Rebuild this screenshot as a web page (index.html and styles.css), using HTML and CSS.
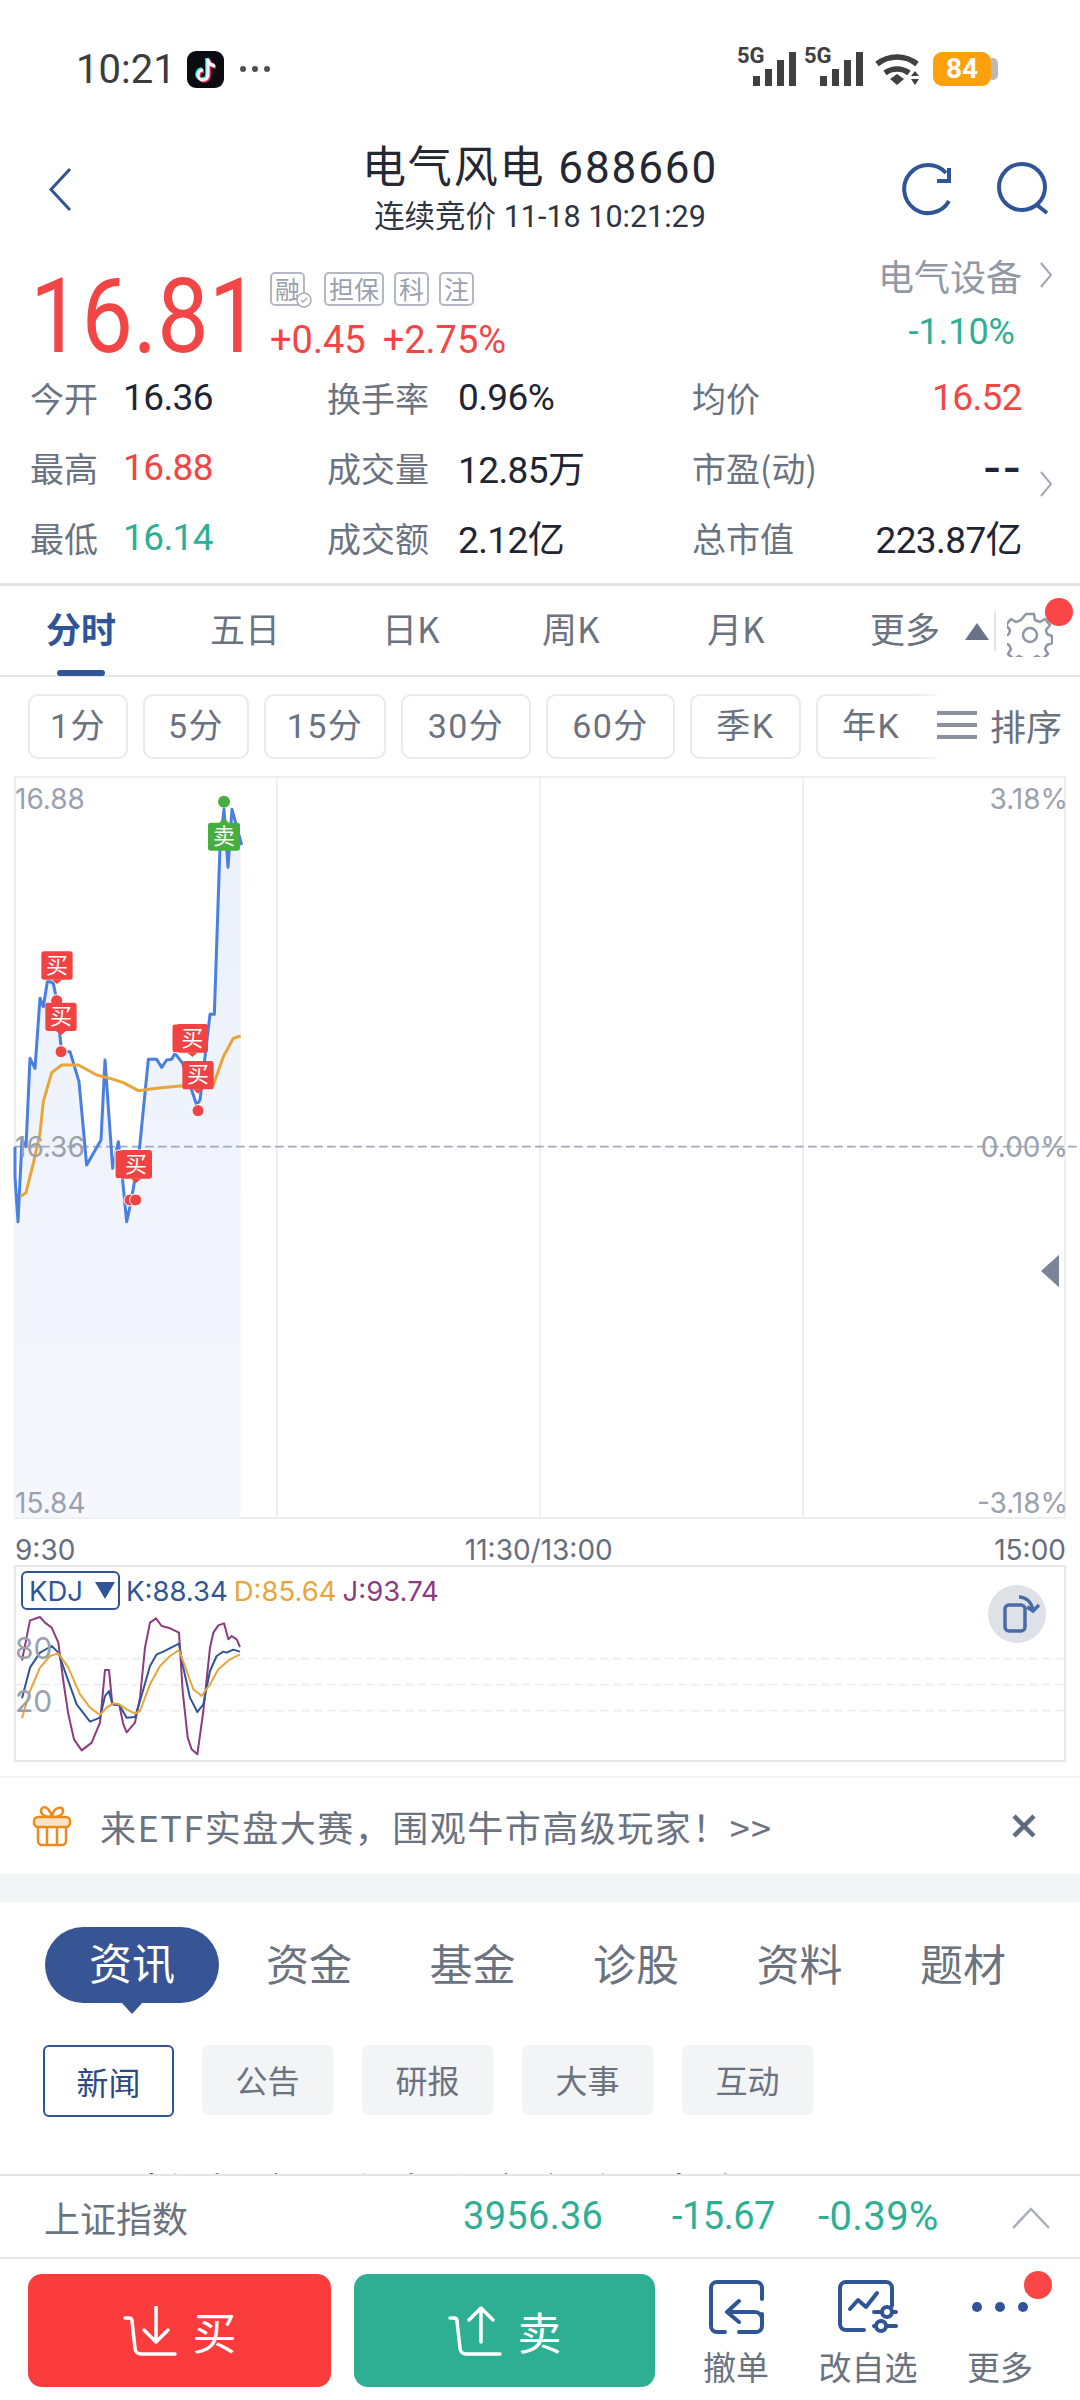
FILE: index.html
```html
<!DOCTYPE html>
<html lang="zh-CN">
<head>
<meta charset="UTF-8" />
<meta name="viewport" content="width=device-width, initial-scale=1.0" />
<title>电气风电 688660</title>
<link rel="stylesheet" href="styles.css">
</head>
<body>
<main class="page">

	<!-- status bar -->
	<div class="statusbar">
		<span class="clock">10:21</span>
		<svg class="tiktok" viewBox="0 0 37 37">
			<rect width="37" height="37" rx="9" fill="#0b0b12"/>
			<path d="M21 8v16a5 5 0 1 1-5-5M21 8c.5 4 3 6.500 7 7" fill="none" stroke="#25f4ee" stroke-width="3.500" transform="translate(-1 -1)"/>
			<path d="M21 8v16a5 5 0 1 1-5-5M21 8c.5 4 3 6.500 7 7" fill="none" stroke="#fe2c55" stroke-width="3.500" transform="translate(1 1)"/>
			<path d="M21 8v16a5 5 0 1 1-5-5M21 8c.5 4 3 6.500 7 7" fill="none" stroke="#fff" stroke-width="3"/>
		</svg>
		<span class="status-dots"><i></i><i></i><i></i></span>
		<div class="status-right">
			<span class="signal"><b>5G</b><svg viewBox="0 0 43 34"><path d="M0 24h7v10h-7zM12 17h7v17h-7zM24 8h7v26h-7zM36 0h7v34h-7z" fill="#404040"/></svg></span>
			<span class="signal"><b>5G</b><svg viewBox="0 0 43 34"><path d="M0 24h7v10h-7zM12 17h7v17h-7zM24 8h7v26h-7zM36 0h7v34h-7z" fill="#404040"/></svg></span>
			<svg class="wifi" viewBox="0 0 47 34">
				<path d="M2 12a32 32 0 0 1 40 0M10 21a20 20 0 0 1 24 0" fill="none" stroke="#404040" stroke-width="5.500"/>
				<path d="M15 27l7-5 7 5-7 6z" fill="#404040"/>
				<path d="M36 24l4-5 4 5zM36 27h8l-4 6z" fill="#404040"/>
			</svg>
			<span class="battery"><span class="battery-level">84</span><i class="battery-rest"></i></span>
		</div>
	</div>

	<!-- nav -->
	<header class="nav">
		<svg class="nav-back" viewBox="0 0 24 45"><path d="M22 2L3 22.500 22 43" fill="none" stroke="#2f5597" stroke-width="3"/></svg>
		<div class="nav-title">
			<h1>电气风电 688660</h1>
			<p>连续竞价 11-18 10:21:29</p>
		</div>
		<div class="nav-icons">
			<svg class="icon-refresh" viewBox="0 0 54 54"><path d="M49 39A24 24 0 1 1 46 11M49 6v13H37" fill="none" stroke="#2f5597" stroke-width="4"/></svg>
			<svg class="icon-search" viewBox="0 0 54 54"><circle cx="26" cy="25" r="23" fill="none" stroke="#2f5597" stroke-width="4"/><path d="M41 43l10 8" fill="none" stroke="#2f5597" stroke-width="4"/></svg>
		</div>
	</header>

	<!-- quote -->
	<section class="quote">
		<div class="price red">16.81</div>
		<div class="quote-mid">
			<div class="tags">
				<span class="tag tag-check">融<svg viewBox="0 0 16 16"><circle cx="8" cy="8" r="7" fill="#fff" stroke="#a7acb8" stroke-width="1.500"/><path d="M5 8l2 2 4-4" fill="none" stroke="#a7acb8" stroke-width="1.500"/></svg></span>
				<span class="tag">担保</span>
				<span class="tag">科</span>
				<span class="tag">注</span>
			</div>
			<div class="change red"><span>+0.45</span><span>+2.75%</span></div>
		</div>
		<div class="sector">
			<div class="sector-name">电气设备<svg viewBox="0 0 12 26"><path d="M1 1l10 12L1 25" fill="none" stroke="#a0a6b3" stroke-width="2"/></svg></div>
			<div class="sector-change green">-1.10%</div>
		</div>
	</section>

	<!-- stats -->
	<section class="stats">
		<span class="label">今开</span><span class="val">16.36</span>
		<span class="label">换手率</span><span class="val">0.96%</span>
		<span class="label">均价</span><span class="val right red">16.52</span>

		<span class="label">最高</span><span class="val red">16.88</span>
		<span class="label">成交量</span><span class="val">12.85万</span>
		<span class="label">市盈(动)</span><span class="val right dash">--</span>

		<span class="label">最低</span><span class="val green">16.14</span>
		<span class="label">成交额</span><span class="val">2.12亿</span>
		<span class="label">总市值</span><span class="val right">223.87亿</span>

		<svg class="stats-more" viewBox="0 0 12 26"><path d="M1 1l10 12L1 25" fill="none" stroke="#a0a6b3" stroke-width="2"/></svg>
	</section>

	<!-- period tabs -->
	<nav class="tabs">
		<span class="tab active">分时</span>
		<span class="tab">五日</span>
		<span class="tab">日K</span>
		<span class="tab">周K</span>
		<span class="tab">月K</span>
		<span class="tab">更多</span>
		<i class="tab-tri"></i>
		<i class="tab-sep"></i>
		<span class="gear">
			<svg viewBox="0 0 46 46">
				<path d="M19 3h8l1 6 5 2 5-3 5 6-4 5 1 4 5 2v7l-5 2-2 4 3 5-6 5-5-3-4 2-1 5h-8l-1-5-4-2-5 3-6-5 3-5-2-4-5-2v-7l5-2 1-4-4-5 5-6 5 3 5-2z" fill="none" stroke="#8f96a4" stroke-width="2.500" stroke-linejoin="round"/>
				<circle cx="23" cy="24" r="7" fill="none" stroke="#8f96a4" stroke-width="2.500"/>
			</svg>
			<i class="dot"></i>
		</span>
	</nav>

	<!-- minute ranges -->
	<div class="ranges">
		<span class="range">1分</span>
		<span class="range">5分</span>
		<span class="range">15分</span>
		<span class="range">30分</span>
		<span class="range">60分</span>
		<span class="range">季K</span>
		<span class="range">年K</span>
		<div class="sort">
			<svg viewBox="0 0 40 30"><path d="M0 3h40M0 15h40M0 27h40" stroke="#8a919f" stroke-width="4"/></svg>
			<span>排序</span>
		</div>
	</div>

	<!-- price chart: coordinates are 3x the page pixels -->
	<div class="chart">
		<svg class="chart-svg" viewBox="0 -12 3240 2229">
			<defs>
				<linearGradient id="area" x1="0" y1="0" x2="0" y2="1">
					<stop offset="0" stop-color="#ebf0fb"/>
					<stop offset="1" stop-color="#f5f7fd"/>
				</linearGradient>
			</defs>
			<path d="M831 -12V2217M1620 -12V2217M2409 -12V2217" stroke="#eceef2" stroke-width="5"/>
			<polygon fill="url(#area)" points="45,1100 45,1190 54,1325 66,1080 78,1100 90,835 105,865 120,655 130,680 142,605 160,610 170,660 180,770 185,815 210,815 237,905 260,1155 303,1080 315,840 338,1165 355,1085 365,1170 380,1325 392,1270 415,1140 445,838 470,838 485,862 500,840 515,838 525,820 548,850 590,975 600,960 615,830 630,703 643,703 660,200 672,88 684,262 696,88 722,190 722,2212 45,2212"/>
			<path d="M45 1100H3240" stroke="#a0a9bd" stroke-width="5" stroke-dasharray="26 13" fill="none"/>
			<polyline class="line-price" points="45,1100 45,1190 54,1325 66,1080 78,1100 90,835 105,865 120,655 130,680 142,605 150,605 160,610 170,660 180,770 185,815 210,815 237,905 260,1155 303,1080 315,840 338,1165 355,1085 365,1170 380,1325 392,1270 415,1140 445,838 470,838 485,862 500,840 515,838 525,820 548,850 590,975 600,960 615,830 630,703 643,703 660,200 672,88 684,262 696,88 725,195"/>
			<polyline class="line-avg" points="62,1250 78,1238 100,1150 120,1060 130,965 155,878 185,855 235,855 290,885 340,898 370,908 415,932 470,925 540,918 640,915 670,830 700,775 722,768"/>

			<circle class="mark-dot" cx="170" cy="662" r="18"/>
			<circle class="mark-dot" cx="183" cy="815" r="18"/>
			<circle class="mark-dot" cx="594" cy="992" r="18"/>
			<circle class="mark-dot" cx="390" cy="1260" r="18"/>
			<circle class="mark-dot" cx="407" cy="1260" r="18"/>
			<circle cx="672" cy="65" r="18" fill="#46ae3f"/>

			<rect class="mark" x="345" y="1110" width="96" height="86" rx="8"/>
			<g class="marker"><rect x="124" y="514" width="94" height="85" rx="8"/><path d="M156 599h30l-15 13z"/><text x="171" y="578">买</text></g>
			<g class="marker"><rect x="136" y="668" width="94" height="85" rx="8"/><path d="M168 753h30l-15 13z"/><text x="183" y="732">买</text></g>
			<rect class="mark" x="516" y="732" width="96" height="86" rx="8"/>
			<g class="marker"><rect x="530" y="732" width="94" height="86" rx="8"/><path d="M562 818h30l-15 13z"/><text x="577" y="797">买</text></g>
			<g class="marker"><rect x="547" y="843" width="94" height="85" rx="8"/><path d="M579 928h30l-15 13z"/><text x="594" y="907">买</text></g>
			<g class="marker"><rect x="360" y="1110" width="96" height="86" rx="8"/><path d="M393 1196h30l-15 13z"/><text x="408" y="1175">买</text></g>
			<g class="marker sell"><rect x="624" y="128" width="96" height="84" rx="8"/><path d="M657 128h30l-15 -13z"/><text x="672" y="192">卖</text></g>
		</svg>
		<span class="ax ax-tl">16.88</span>
		<span class="ax ax-tr">3.18%</span>
		<span class="ax ax-ml">16.36</span>
		<span class="ax ax-mr">0.00%</span>
		<span class="ax ax-bl">15.84</span>
		<span class="ax ax-br">-3.18%</span>
		<svg class="chart-handle" viewBox="0 0 20 36"><path d="M20 0v36L0 18z" fill="#7a8597"/></svg>
	</div>

	<div class="times">
		<span>9:30</span><span class="times-mid">11:30/13:00</span><span>15:00</span>
	</div>

	<!-- KDJ pane -->
	<div class="kdj">
		<svg class="kdj-svg" viewBox="45 225 3153 588">
			<path d="M45 503H3240M45 581H3240M45 659H3240" stroke="#eceef2" stroke-width="5" stroke-dasharray="26 13" fill="none"/>
			<polyline class="kdj-j" points="66,508 90,388 120,378 135,395 155,410 175,455 190,570 205,670 222,745 245,778 275,755 300,695 315,537 327,537 337,640 358,642 370,700 380,724 405,695 420,620 435,470 450,395 468,382 485,405 510,412 537,425 548,600 563,740 575,775 592,790 610,660 630,470 640,425 655,403 672,397 685,445 695,435 710,445 720,468"/>
			<polyline class="kdj-k" points="66,622 90,530 120,485 155,465 175,485 205,570 230,640 270,692 300,680 315,615 327,600 337,640 358,642 380,680 405,678 420,630 450,525 470,490 490,482 537,458 550,530 570,620 592,663 610,640 630,540 650,495 670,482 680,485 700,476 720,482"/>
			<polyline class="kdj-d" points="66,682 90,600 120,530 150,495 175,487 205,530 240,610 270,650 300,672 320,650 340,637 358,640 380,655 405,668 420,660 450,580 480,525 510,495 537,477 560,540 580,595 605,615 630,580 655,535 690,505 720,490"/>
		</svg>
		<div class="kdj-legend">
			<span class="kdj-pick">KDJ<i></i></span>
			<span class="c-k">K:88.34</span>
			<span class="c-d">D:85.64</span>
			<span class="c-j">J:93.74</span>
		</div>
		<span class="ax kdj-80">80</span>
		<span class="ax kdj-20">20</span>
		<span class="rotate">
			<svg viewBox="0 0 58 58"><rect x="17" y="20" width="20" height="26" rx="4" fill="none" stroke="#4a6ba6" stroke-width="3.500"/><path d="M31 12c6 0 12 4 14 13M51 20l-6 6-6-4" fill="none" stroke="#4a6ba6" stroke-width="3.500"/></svg>
		</span>
	</div>

	<!-- banner -->
	<div class="banner">
		<svg class="gift" viewBox="0 0 40 41">
			<path d="M20 11C14 11 9 9 9 5s4-5 7-2 4 8 4 8 1-6 4-8 7-2 7 2-5 6-11 6z" fill="none" stroke="#ee8a1d" stroke-width="2.500"/>
			<rect x="2" y="11" width="36" height="10" rx="4" fill="#fbe3c4" stroke="#ee8a1d" stroke-width="2.500"/>
			<path d="M6 21v14a4 4 0 0 0 4 4h20a4 4 0 0 0 4-4V21M15 21v18M25 21v18" fill="none" stroke="#ee8a1d" stroke-width="2.500"/>
		</svg>
		<span class="banner-text">来ETF实盘大赛，围观牛市高级玩家！&gt;&gt;</span>
		<svg class="banner-close" viewBox="0 0 26 24"><path d="M3 2l20 20M23 2L3 22" stroke="#5f6b80" stroke-width="4.500"/></svg>
	</div>
	<div class="band"></div>

	<!-- news -->
	<section class="news">
		<div class="news-tabs">
			<span class="pill">资讯</span>
			<span>资金</span>
			<span>基金</span>
			<span>诊股</span>
			<span>资料</span>
			<span>题材</span>
		</div>
		<div class="news-subs">
			<span class="sub on">新闻</span>
			<span class="sub">公告</span>
			<span class="sub">研报</span>
			<span class="sub">大事</span>
			<span class="sub">互动</span>
		</div>
		<p class="news-title">3天科创板金股主力资金净流入超行三</p>
	</section>

	<!-- index ticker -->
	<div class="ticker">
		<span class="ticker-name">上证指数</span>
		<span class="ticker-num green">3956.36</span>
		<span class="ticker-chg green">-15.67</span>
		<span class="ticker-pct green">-0.39%</span>
		<svg class="ticker-up" viewBox="0 0 38 22"><path d="M1 21L19 2l18 19" fill="none" stroke="#a8adb8" stroke-width="2.500"/></svg>
	</div>

	<!-- actions -->
	<footer class="actions">
		<button class="btn btn-buy">
			<svg viewBox="0 0 54 50"><path d="M2 12h4c2 0 3 1 3 3l3 27c0 4 3 6 6 6h34M33 1v34M21 24l12 12 12-12" fill="none" stroke="#fff" stroke-width="3.500" stroke-linecap="round" stroke-linejoin="round"/></svg>
			<span>买</span>
		</button>
		<button class="btn btn-sell">
			<svg viewBox="0 0 54 50"><path d="M2 12h4c2 0 3 1 3 3l3 27c0 4 3 6 6 6h34M33 36V2M21 14L33 2l12 12" fill="none" stroke="#fff" stroke-width="3.500" stroke-linecap="round" stroke-linejoin="round"/></svg>
			<span>卖</span>
		</button>
		<div class="act act-cancel">
			<svg viewBox="0 0 57 54"><path d="M17 52H9a6 6 0 0 1-6-6V8a6 6 0 0 1 6-6h39a6 6 0 0 1 6 6v11M54 34v12a6 6 0 0 1-6 6H31M31 21L19 32l12 10M20 32h27a7 7 0 0 1 7 7" fill="none" stroke="#2f5597" stroke-width="4" stroke-linecap="round" stroke-linejoin="round"/></svg>
			<span>撤单</span>
		</div>
		<div class="act act-watch">
			<svg viewBox="0 0 62 54"><path d="M27 50H9a6 6 0 0 1-6-6V8a6 6 0 0 1 6-6h40a6 6 0 0 1 6 6v18M13 29l8-9 8 7 11-14M37 32h22M37 46h22" fill="none" stroke="#2f5597" stroke-width="4" stroke-linecap="round" stroke-linejoin="round"/><circle cx="50" cy="32" r="5" fill="#fff" stroke="#2f5597" stroke-width="4"/><circle cx="44" cy="46" r="5" fill="#fff" stroke="#2f5597" stroke-width="4"/></svg>
			<span>改自选</span>
		</div>
		<div class="act act-more">
			<span class="more-dots"><i></i><i></i><i></i></span>
			<i class="dot"></i>
			<span>更多</span>
		</div>
	</footer>
</main>
</body>
</html>
```

FILE: styles.css
```css
* {
	padding: 0;
	margin: 0;
	box-sizing: border-box;
}
body {
	background: #fff;
	font-family: "Noto Sans CJK SC", sans-serif;
	color: #1f2533;
}
.page {
	width: 1080px;
	height: 2400px;
	overflow: hidden;
	position: relative;
}
.red { color: #f24545; }
.green { color: #2eaf94; }
i { display: block; font-style: normal; }
.dot {
	position: absolute;
	width: 28px;
	height: 28px;
	border-radius: 50%;
	background: #fa4646;
}

/* status bar */
.statusbar {
	height: 138px;
	padding-left: 76px;
	padding-right: 82px;
	display: flex;
	align-items: center;
}
.clock {
	font: 400 40px Roboto, sans-serif;
	color: #3c3c3c;
	width: 111px;
}
.tiktok { width: 37px; height: 37px; }
.status-dots {
	display: flex;
	gap: 6px;
	margin-left: 16px;
}
.status-dots i {
	width: 6px;
	height: 6px;
	border-radius: 50%;
	background: #505050;
}
.status-right {
	margin-left: auto;
	display: flex;
	align-items: center;
	height: 34px;
}
.signal {
	position: relative;
	width: 59px;
	height: 34px;
	margin-right: 8px;
}
.signal b {
	position: absolute;
	left: 0;
	top: -6px;
	font: 700 22px/20px Roboto, sans-serif;
	color: #404040;
}
.signal svg {
	position: absolute;
	right: 0;
	top: 0;
	width: 43px;
	height: 34px;
}
.wifi {
	width: 47px;
	height: 34px;
	margin-left: 4px;
}
.battery {
	display: flex;
	align-items: center;
	margin-left: 11px;
}
.battery-level {
	width: 58px;
	height: 34px;
	border-radius: 9px;
	background: #ffa00d;
	color: #fff;
	font: 700 28px/34px Roboto, sans-serif;
	text-align: center;
}
.battery-rest {
	width: 7px;
	height: 22px;
	border-radius: 0 5px 5px 0;
	background: #b9b9b9;
}

/* nav */
.nav {
	height: 117px;
	padding-top: 6px;
	display: grid;
	grid-template-columns: 1fr auto 1fr;
}
.nav-back {
	width: 24px;
	height: 45px;
	margin: 23px 0 0 48px;
}
.nav-title { text-align: center; }
.nav-title h1 {
	font-size: 44px;
	line-height: 48px;
	font-weight: 400;
	letter-spacing: 1.900px;
	color: #232833;
}
.nav-title h1, .nav-title p {
	font-family: Roboto, "Noto Sans CJK SC", sans-serif;
}
.nav-title p {
	margin-top: 3px;
	font-size: 30.500px;
	line-height: 44px;
	color: #2f3542;
}
.nav-icons {
	display: flex;
	justify-content: flex-end;
	gap: 42px;
	padding: 18px 30px 0 0;
}
.icon-refresh { width: 54px; height: 54px; }
.icon-search { width: 54px; height: 54px; }

/* quote */
.quote {
	height: 110px;
	display: flex;
	padding-left: 30px;
	position: relative;
}
.price {
	font: 400 103px/124px Roboto, sans-serif;
	width: 240px;
	transform: scaleX(.89);
	transform-origin: left center;
}
.tags {
	display: flex;
	gap: 10px;
	margin-top: 17px;
	height: 34px;
}
.tag {
	display: block;
	height: 34px;
	padding: 0 3px;
	border: 2px solid #b3b8c3;
	border-radius: 5px;
	font-size: 25px;
	line-height: 28px;
	color: #9aa0ad;
	position: relative;
}
.tag-check { margin-right: 9px; }
.tag-check svg {
	position: absolute;
	right: -9px;
	bottom: -4px;
	width: 16px;
	height: 16px;
}
.change {
	display: flex;
	gap: 17px;
	margin-top: 12px;
	font: 400 38px/44px Roboto, sans-serif;
}
.sector {
	position: absolute;
	right: 28px;
	top: -5px;
	text-align: right;
}
.sector-name {
	display: flex;
	align-items: center;
	gap: 18px;
	font-size: 36px;
	line-height: 50px;
	color: #9298a6;
}
.sector-name svg { width: 12px; height: 26px; }
.sector-change {
	margin: 9px 37px 0 0;
	font: 400 36px/46px Roboto, sans-serif;
}

/* stats */
.stats {
	height: 224px;
	margin-top: -3px;
	padding: 0 58px 11px 30px;
	border-bottom: 3px solid #e3e5e9;
	display: grid;
	grid-template-columns: 93px 204px 131px 234px 170px 1fr;
	grid-template-rows: repeat(3, 70px);
	align-items: center;
	position: relative;
}
.label {
	font-size: 34px;
	color: #6b7280;
	white-space: nowrap;
}
.val {
	font: 400 37px Roboto, "Noto Sans CJK SC", sans-serif;
	letter-spacing: -.6px;
	white-space: nowrap;
}
.val.right { text-align: right; }
.val.dash {
	font-family: Inter, sans-serif;
	font-weight: 600;
	font-size: 40px;
	letter-spacing: 1px;
}
.stats-more {
	position: absolute;
	right: 28px;
	top: 109px;
	width: 12px;
	height: 26px;
}

/* tabs */
.tabs {
	height: 91px;
	border-bottom: 2px solid #e3e5e9;
	padding-left: 46px;
	display: grid;
	grid-template-columns: 164px 172px 160px 165px 163px 95px 29px 13px 1fr;
	align-items: center;
	position: relative;
}
.tab {
	font-size: 35px;
	color: #6b7280;
	line-height: 82px;
	padding-bottom: 6px;
}
.tab.active {
	color: #2f5597;
	font-weight: 700;
	position: relative;
}
.tab.active::after {
	content: "";
	position: absolute;
	left: 11px;
	bottom: -1px;
	width: 48px;
	height: 6px;
	border-radius: 3px;
	background: #2f5597;
}
.tab-tri {
	width: 0;
	height: 0;
	border-left: 12px solid transparent;
	border-right: 12px solid transparent;
	border-bottom: 17px solid #68738a;
	margin-top: 2px;
}
.tab-sep {
	width: 2px;
	height: 40px;
	background: #e3e5e9;
}
.gear {
	position: relative;
	display: block;
	width: 46px;
	height: 46px;
	margin-top: 6px;
}
.gear svg { width: 46px; height: 46px; }
.gear .dot {
	right: -20px;
	top: -13px;
}

/* ranges */
.ranges {
	height: 99px;
	padding: 17px 0 0 28px;
	display: grid;
	grid-template-columns: 100px 106px 122px 130px 129px 111px 130px;
	grid-template-rows: 65px;
	column-gap: 15px;
	position: relative;
}
.range {
	border: 2px solid #e8eaee;
	border-radius: 10px;
	font-family: Roboto, "Noto Sans CJK SC", sans-serif;
	font-size: 34px;
	letter-spacing: 1.500px;
	line-height: 60px;
	text-align: center;
	color: #6b7280;
}
.range:nth-child(7) { text-align: left; padding-left: 24px; }
.sort {
	position: absolute;
	right: 0;
	top: 10px;
	width: 165px;
	height: 76px;
	background: linear-gradient(to right, rgba(255,255,255,0), #fff 18%);
	display: flex;
	align-items: center;
	gap: 13px;
	padding-left: 22px;
	font-size: 36px;
	color: #6b7280;
}
.sort svg { width: 40px; height: 30px; }

/* chart */
.chart {
	height: 743px;
	position: relative;
	margin: 0;
}
.chart::before {
	content: "";
	position: absolute;
	left: 14px;
	right: 14px;
	top: 0;
	bottom: 0;
	border: 2px solid #eceef2;
}
.chart-svg {
	position: absolute;
	left: 0;
	top: 0;
	width: 1080px;
	height: 743px;
}
.line-price, .line-avg {
	fill: none;
	stroke-linejoin: round;
	stroke-width: 9;
}
.line-price { stroke: #4a7fe0; }
.line-avg { stroke: #e8a53a; }
.mark-dot { fill: #f04343; stroke: #fff; stroke-width: 3; }
.mark { fill: #f04343; stroke: #fff; stroke-width: 3; }
.marker { fill: #f04343; }
.marker.sell { fill: #46ae3f; }
.marker text {
	fill: #fff;
	font-size: 66px;
	text-anchor: middle;
}
.ax {
	position: absolute;
	font: 400 28px/30px Inter, sans-serif;
	color: #9aa1ae;
}
.ax-tl { left: 15px; top: 8px; }
.ax-tr { right: 12px; top: 8px; }
.ax-ml { left: 15px; top: 356px; }
.ax-mr { right: 12px; top: 356px; }
.ax-bl { left: 15px; top: 712px; }
.ax-br { right: 12px; top: 712px; }
.chart-handle {
	position: absolute;
	right: 21px;
	top: 477px;
	width: 18px;
	height: 36px;
}
.times {
	height: 46px;
	padding: 16px 14px 0 15px;
	display: flex;
	justify-content: space-between;
	font: 400 28px/30px Inter, sans-serif;
	color: #666e7e;
}
.times-mid { margin-left: 8px; }

/* kdj */
.kdj {
	height: 197px;
	margin: 0 14px;
	border: 2px solid #e6e8ec;
	position: relative;
}
.kdj-svg {
	position: absolute;
	left: -1px;
	top: -1px;
	width: 1051px;
	height: 196px;
}
.kdj-svg polyline {
	fill: none;
	stroke-width: 6;
	stroke-linejoin: round;
}
.kdj-j { stroke: #8e3a80; }
.kdj-k { stroke: #2f5597; }
.kdj-d { stroke: #e8a53a; }
.kdj-legend {
	position: relative;
	padding: 4px 0 0 5px;
	display: flex;
	align-items: center;
	gap: 6px;
	font: 400 27.500px/38px Inter, sans-serif;
}
.kdj-pick {
	display: flex;
	align-items: center;
	gap: 12px;
	width: 99px;
	height: 39px;
	padding-left: 6px;
	border: 2px solid #2f5597;
	border-radius: 6px;
	color: #2f5597;
	line-height: 34px;
}
.kdj-pick i {
	width: 0;
	height: 0;
	border-left: 10px solid transparent;
	border-right: 10px solid transparent;
	border-top: 17px solid #2f5597;
}
.c-k { color: #2f5597; }
.c-d { color: #e8a53a; }
.c-j { color: #8e3a80; }
.kdj-80 { left: -1px; top: 66px; font-size: 30px; }
.kdj-20 { left: -1px; top: 119px; font-size: 30px; }
.rotate {
	position: absolute;
	right: 18px;
	top: 18px;
	width: 58px;
	height: 58px;
	border-radius: 50%;
	background: #dfe1e8;
}
.rotate svg { width: 58px; height: 58px; display: block; }

/* banner */
.banner {
	height: 98px;
	margin-top: 14px;
	border-top: 2px solid #f2f3f5;
	padding: 0 43px 0 32px;
	display: flex;
	align-items: center;
}
.gift { width: 40px; height: 41px; }
.banner-text {
	margin-left: 28px;
	font-size: 36px;
	letter-spacing: 1.500px;
	color: #6b7280;
	white-space: nowrap;
}
.banner-close {
	margin-left: auto;
	width: 26px;
	height: 24px;
}
.band {
	height: 28px;
	background: #f3f4f6;
}

/* news */
.news {
	height: 272px;
	overflow: hidden;
	padding: 25px 0 0 45px;
}
.news-tabs {
	display: flex;
	align-items: center;
	font-size: 43px;
	color: #6b7280;
	height: 76px;
}
.news-tabs span {
	display: block;
	flex: none;
	width: 163.500px;
	padding-left: 47px;
	padding-bottom: 6px;
	white-space: nowrap;
}
.news-tabs .pill {
	width: 174px;
	height: 76px;
	padding: 0;
	border-radius: 38px / 38px;
	background: #375594;
	color: #fff;
	text-align: center;
	line-height: 69px;
	position: relative;
}
.pill::after {
	content: "";
	position: absolute;
	left: 76px;
	top: 75px;
	border-left: 11px solid transparent;
	border-right: 11px solid transparent;
	border-top: 12px solid #375594;
}
.news-subs {
	display: flex;
	gap: 29px;
	margin: 42px 0 0 -2px;
}
.sub {
	width: 131px;
	height: 70px;
	border-radius: 6px;
	background: #f3f4f6;
	font-size: 32px;
	line-height: 68px;
	text-align: center;
	color: #6b7280;
}
.sub.on {
	height: 72px;
	margin-right: -1px;
	border: 2px solid #2f5597;
	background: #fff;
	color: #2c4a80;
	line-height: 68px;
}
.news-title {
	margin: 43px 0 0 -2px;
	font-size: 46px;
	line-height: 64px;
	white-space: nowrap;
	color: #232833;
}

/* ticker */
.ticker {
	height: 85px;
	border-top: 2px solid #e3e5e9;
	border-bottom: 2px solid #e3e5e9;
	display: flex;
	align-items: center;
	position: relative;
	padding-left: 44px;
	background: #fff;
}
.ticker-name {
	font-size: 36px;
	color: #6b7280;
}
.ticker-num, .ticker-chg, .ticker-pct {
	position: absolute;
	top: 18px;
	font: 400 38px Roboto, sans-serif;
}
.ticker-num { left: 463px; letter-spacing: .3px; }
.ticker-chg { left: 672px; letter-spacing: -.5px; }
.ticker-pct { left: 818px; font-size: 40px; top: 17px; letter-spacing: .4px; }
.ticker-up {
	position: absolute;
	left: 1012px;
	top: 31px;
	width: 38px;
	height: 22px;
}

/* bottom actions */
.actions {
	height: 141px;
	padding: 15px 0 0 28px;
	display: grid;
	grid-template-columns: 303px 301px 130px 130px 1fr;
	column-gap: 0;
	position: relative;
}
.btn {
	border: 0;
	height: 113px;
	border-radius: 14px;
	color: #fff;
	font-family: inherit;
	font-size: 44px;
	display: flex;
	align-items: center;
	justify-content: center;
	gap: 16px;
}
.btn svg { width: 54px; height: 50px; }
.btn-buy { background: #fb3c3c; width: 303px; }
.btn-sell { background: #2eaf94; width: 301px; margin-left: 23px; }
.act {
	position: relative;
	display: flex;
	flex-direction: column;
	align-items: center;
	font-size: 33px;
	color: #6b7280;
	line-height: 44px;
}
.act span:last-child { position: absolute; top: 70px; white-space: nowrap; }
.act-cancel { margin-left: 26px; left: 26px; }
.act-cancel svg { width: 57px; height: 54px; margin-top: 6px; }
.act-watch { margin-left: 26px; left: 28px; }
.act-watch svg { width: 62px; height: 54px; margin-top: 6px; }
.act-more { left: 14px; }
.more-dots {
	display: flex;
	gap: 13px;
	margin-top: 28px;
}
.more-dots i {
	width: 10px;
	height: 10px;
	border-radius: 50%;
	background: #2f5597;
}
.act-more .dot {
	left: 118px;
	top: -3px;
}
```
